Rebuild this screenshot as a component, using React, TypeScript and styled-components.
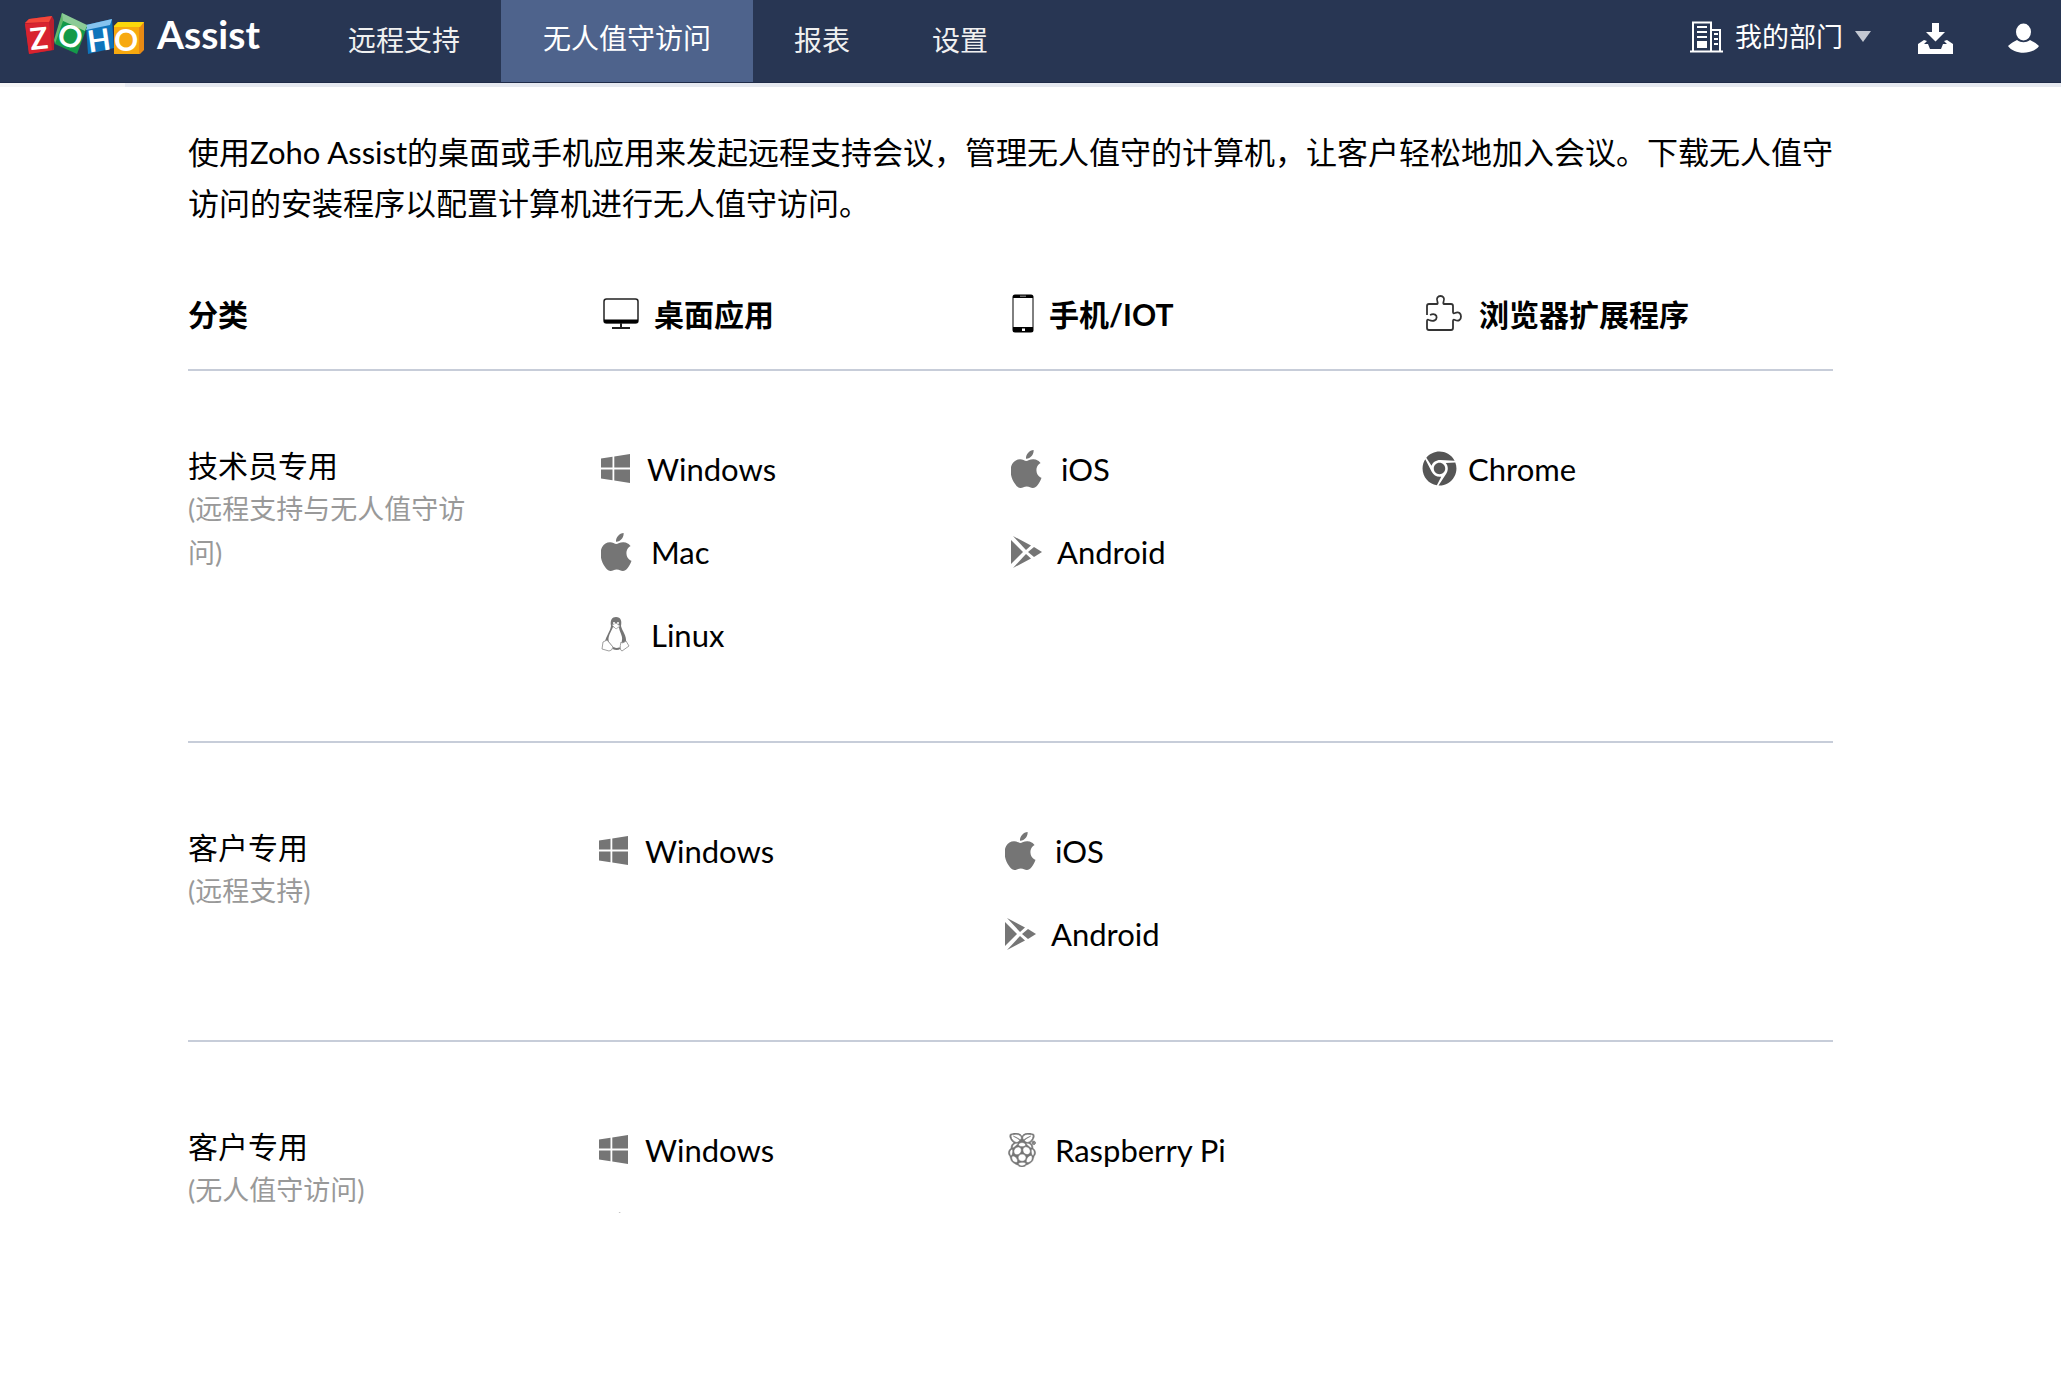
import React from "react";
import styled, { createGlobalStyle } from "styled-components";
import { SiApple, SiRaspberrypi } from "react-icons/si";
import { FaChrome } from "react-icons/fa";

const sans = '"Lato", "Noto Sans CJK SC", sans-serif';

const GlobalStyle = createGlobalStyle`
  *, *::before, *::after { box-sizing: border-box; }
  body {
    margin: 0;
    background: #ffffff;
    color: #000000;
    font-family: ${sans};
    font-size: 30px;
  }
`;

const TopBar = styled.header`
  display: flex;
  align-items: stretch;
  height: 83px;
  background: #283653;
  border-bottom: 1px solid #1f2b48;
`;

const Brand = styled.a`
  display: flex;
  align-items: center;
  gap: 12px;
  width: 307px;
  padding: 0 0 14px 24px;
  color: #ffffff;
  font-size: 39px;
  font-weight: 700;
  text-decoration: none;
`;

const LogoArt = styled.svg`
  flex: none;
  overflow: visible;
`;

const BlockLetter = styled.text`
  fill: #ffffff;
  font-family: ${sans};
  font-size: 30px;
  font-weight: 700;
  text-anchor: middle;
`;

const Nav = styled.nav`
  display: flex;
  flex: 1;
`;

const NavLink = styled.a<{ $active?: boolean }>`
  display: flex;
  align-items: center;
  padding: 0 ${(p) => (p.$active ? 42 : 41)}px ${(p) => (p.$active ? 8 : 4)}px;
  background: ${(p) => (p.$active ? "#4e638c" : "transparent")};
  color: ${(p) => (p.$active ? "#ffffff" : "#f0f0f0")};
  font-size: 28px;
  text-decoration: none;
`;

const Tools = styled.div`
  display: flex;
  align-items: center;
  padding: 0 22px 8px 0;
`;

const ToolButton = styled.button`
  display: flex;
  align-items: center;
  gap: 12px;
  margin: 0;
  padding: 0;
  border: 0;
  background: none;
  color: #ffffff;
  font-family: inherit;
  font-size: 27px;
  line-height: 40px;
`;

const ToolGroup = styled.div`
  display: flex;
  align-items: center;
  gap: 54px;
  margin-left: 46px;
  padding-top: 2px;
`;

const Strip = styled.div`
  height: 4px;
  background: linear-gradient(90deg, #f5f5f6 125px, #e6e9f0 125px);
`;

const Main = styled.main`
  padding: 40px 228px 0 188px;
`;

const Intro = styled.p`
  margin: 0 -20px 0 0;
  font-size: 31px;
  line-height: 51px;
`;

const Downloads = styled.table`
  display: block;
  margin-top: 54px;
`;

const Head = styled.thead`
  display: block;
`;

const Body = styled.tbody`
  display: block;
`;

const Row = styled.tr<{ $columns: string; $top?: number }>`
  display: grid;
  grid-template-columns: ${(p) => p.$columns};
  padding-top: ${(p) => p.$top ?? 68}px;
  padding-bottom: 63px;
  border-bottom: 2px solid #c7cdd9;

  &:last-child {
    padding-bottom: 0;
    border-bottom: 0;
  }
`;

const HeadRow = styled(Row)`
  && {
    padding: 0 0 26px;
    border-bottom: 2px solid #c7cdd9;
  }
`;

const HeadCell = styled.th`
  display: flex;
  align-items: center;
  gap: 15px;
  height: 60px;
  padding: 0;
  font-weight: 700;
  text-align: left;
`;

const AudienceCell = styled.th`
  padding: 14px 120px 0 0;
  font-weight: 400;
  text-align: left;
  line-height: 44px;
`;

const Note = styled.div`
  color: #999999;
  font-size: 27px;
  line-height: 44px;
`;

const Cell = styled.td`
  padding: 0;
`;

const AppLink = styled.a`
  display: flex;
  align-items: center;
  height: 83px;
  padding-bottom: 4px;
  color: #000000;
  font-size: 31px;
  text-decoration: none;
`;

const IconBox = styled.span<{ $width: number }>`
  display: flex;
  width: ${(p) => p.$width}px;
  flex: none;
  color: #757575;
`;

const Peek = styled.div`
  display: flex;
  height: 20px;
  padding: 19px 0 0 18px;
`;

function ZohoLogo() {
  return (
    <LogoArt width="121" height="43" viewBox="0 0 121 43" role="img" aria-label="ZOHO">
      <path d="M1 10 L5 6 L28 3 L30 7 L30 37 L5 41 Z" fill="#b81f2e" />
      <path d="M1 10 L5 6 L28 3 L25 9 Z" fill="#f4473a" />
      <path d="M1 11 L25 9 L28 37 L5 41 Z" fill="#d8232f" />
      <path d="M62 12 L88 6 L90 35 L64 41 Z" fill="#0f74bb" />
      <path d="M62 12 L88 6 L86 12 L62 17 Z" fill="#86c4ef" />
      <path d="M38 0 L63 14 L53 41 L31 31 Z" fill="#149a49" />
      <path d="M38 0 L63 12 L61 18 L37 7 Z" fill="#8ccb97" />
      <path d="M38 0 L39 8 L31 31 L30 27 Z" fill="#62b96b" />
      <path d="M90 13 L94 9 L120 9 L120 37 L116 41 L90 41 Z" fill="#e88a14" />
      <path d="M90 13 L94 9 L120 9 L116 14 L90 14 Z" fill="#fbd80b" />
      <path d="M90 14 L115 14 L115 41 L90 41 Z" fill="#f7a90f" />
      <g transform="rotate(-6 15 25)"><BlockLetter x="15" y="36">Z</BlockLetter></g>
      <g transform="rotate(20 46 24)"><BlockLetter x="46" y="34">O</BlockLetter></g>
      <g transform="rotate(-8 75 27)"><BlockLetter x="75" y="38">H</BlockLetter></g>
      <BlockLetter x="102" y="38">O</BlockLetter>
    </LogoArt>
  );
}

function BuildingIcon() {
  return (
    <svg width="33" height="32" viewBox="0 0 33 32" fill="none" stroke="#fff" strokeWidth="2" aria-hidden="true">
      <path d="M0 30.5H33" />
      <path d="M3 30V1.500H21V30M21 9H30V30" />
      <path d="M7 6H17M7 11H17M7 16H17" />
      <path d="M24 13H28M24 18H28M24 23H28" />
      <path d="M8 21H16V26H8Z" fill="#fff" />
    </svg>
  );
}

function CaretIcon() {
  return (
    <svg width="16" height="12" viewBox="0 0 16 12" aria-hidden="true">
      <path d="M0 0H16L8 11Z" fill="#c3c8d2" />
    </svg>
  );
}

function DownloadIcon() {
  return (
    <svg width="37" height="33" viewBox="0 0 37 33" fill="#fff" aria-hidden="true">
      <path d="M15 1H22V10H28L18.500 19.500L9 10H15Z" />
      <path d="M7 18L10 19L7 22H11L13 27H24L26 22H30L27 19L30 18L36 22V32H1V22Z" />
    </svg>
  );
}

function PersonIcon() {
  return (
    <svg width="31" height="30" viewBox="0 0 31 30" fill="#fff" aria-hidden="true">
      <ellipse cx="15.500" cy="9" rx="7.500" ry="8.500" />
      <path d="M0 23C3 20 7 18 9 17C13 20 18 20 22 17C24 18 28 20 31 23C25 32 6 32 0 23Z" />
    </svg>
  );
}

function MonitorIcon() {
  return (
    <svg width="36" height="31" viewBox="0 0 36 31" aria-hidden="true">
      <rect x="1" y="1" width="34" height="24" rx="2.500" fill="none" stroke="#222" strokeWidth="1.500" />
      <path d="M1 21.500H35V23.500Q35 25 33 25H3Q1 25 1 23.500Z" fill="#000" />
      <path d="M18 25V30M9 30H27" stroke="#222" strokeWidth="2" />
    </svg>
  );
}

function PhoneIcon() {
  return (
    <svg width="22" height="39" viewBox="0 0 22 39" aria-hidden="true">
      <rect x="0.500" y="0.500" width="21" height="38" rx="2.500" fill="#000" />
      <rect x="1.500" y="4" width="19" height="29" fill="#fff" />
      <path d="M8 2.200H14" stroke="#999" />
      <rect x="10" y="34.500" width="3" height="2.500" fill="#fff" />
    </svg>
  );
}

function PuzzleIcon() {
  return (
    <svg width="38" height="36" viewBox="0 0 38 36" fill="none" stroke="#333" strokeWidth="1.800" aria-hidden="true">
      <path d="M1 20V11Q1 9 3 9H11Q12 9 11.500 7C8 -1 21 -1 17.500 7Q17 9 18 9H25Q27 9 27 11V17Q27 19 29 18C37 14 37 29 29 25Q27 24 27 26V33Q27 35 25 35H3Q1 35 1 33V26Q1 24 3 25C13 29 13 16 4 20" />
    </svg>
  );
}

function WindowsIcon() {
  return (
    <svg width="29" height="29" viewBox="0 0 29 29" fill="#757575" aria-hidden="true">
      <path d="M0 4.500L11.500 2.800V13.600H0ZM13.300 2.400L29 0V13.600H13.300ZM0 15.400H11.500V26.200L0 24.500ZM13.300 15.400H29V29L13.300 26.600Z" />
    </svg>
  );
}

function LinuxIcon() {
  return (
    <svg width="29" height="35" viewBox="0 0 29 35" aria-hidden="true">
      <path d="M10 9C9 3 11 0 15 0C20 0 21 4 20 9C21 14 26 18 25 26L20 29L9 31L4 25C5 19 9 15 10 9Z" fill="#757575" />
      <path d="M12 10C10 15 6 20 8 25L12 30Q16 32 20 29L21 23C22 19 18 14 18 10Q15 12 12 10Z" fill="#fff" />
      <path d="M11 8L15 6L19 9L15 12Z" fill="#fff" stroke="#999" strokeWidth="0.700" />
      <circle cx="13" cy="6" r="1" fill="#fff" />
      <circle cx="17" cy="6" r="1" fill="#fff" />
      <path d="M2 25L6 23L12 30Q11 34 8 34L1 32ZM20 25Q21 27 25 24L28 29L21 34Q18 33 20 25Z" fill="#fff" stroke="#888" strokeWidth="0.800" />
      <path d="M12 31Q16 33 19 31" fill="none" stroke="#757575" strokeWidth="2" />
    </svg>
  );
}

function PlayIcon() {
  return (
    <svg width="31" height="32" viewBox="0 0 31 32" fill="#757575" aria-hidden="true">
      <path d="M0 4L12 16L0 28Z" />
      <path d="M2 0L20 9.500L15 14Z" />
      <path d="M2 32L20 22.500L15 18Z" />
      <path d="M23 11L31 16L23 21L17 16Z" />
    </svg>
  );
}

function AppleIcon() {
  return <SiApple size={38} viewBox="2.500 0 24 24" aria-hidden="true" />;
}

function RaspberryIcon() {
  return <SiRaspberrypi size={34} viewBox="0 0 24 24" stroke="#757575" strokeWidth="0.400" aria-hidden="true" />;
}

function ChromeIcon() {
  return <FaChrome size={35} color="#555555" aria-hidden="true" />;
}

const apps = {
  windows: { label: "Windows", icon: WindowsIcon, width: 46 },
  mac: { label: "Mac", icon: AppleIcon, width: 50 },
  linux: { label: "Linux", icon: LinuxIcon, width: 50 },
  ios: { label: "iOS", icon: AppleIcon, width: 50 },
  android: { label: "Android", icon: PlayIcon, width: 46 },
  raspberry: { label: "Raspberry Pi", icon: RaspberryIcon, width: 50 },
  chrome: { label: "Chrome", icon: ChromeIcon, width: 46 },
};

type AppKey = keyof typeof apps;

interface Audience {
  title: string;
  note: string;
  columns: string;
  top?: number;
  cells: AppKey[][];
}

const audiences: Audience[] = [
  {
    title: "技术员专用",
    note: "(远程支持与无人值守访问)",
    columns: "413fr 410fr 411fr 411fr",
    top: 58,
    cells: [["windows", "mac", "linux"], ["ios", "android"], ["chrome"]],
  },
  {
    title: "客户专用",
    note: "(远程支持)",
    columns: "411fr 406fr 414fr 414fr",
    cells: [["windows"], ["ios", "android"], []],
  },
  {
    title: "客户专用",
    note: "(无人值守访问)",
    columns: "411fr 406fr 414fr 414fr",
    cells: [["windows"], ["raspberry"], []],
  },
];

function AppItem({ name }: { name: AppKey }) {
  const { label, icon: Icon, width } = apps[name];
  return (
    <AppLink href="#">
      <IconBox $width={width}>
        <Icon />
      </IconBox>
      {label}
    </AppLink>
  );
}

export default function App() {
  return (
    <>
      <GlobalStyle />
      <TopBar>
        <Brand href="#">
          <ZohoLogo />
          Assist
        </Brand>
        <Nav>
          <NavLink href="#">远程支持</NavLink>
          <NavLink href="#" $active>
            无人值守访问
          </NavLink>
          <NavLink href="#">报表</NavLink>
          <NavLink href="#">设置</NavLink>
        </Nav>
        <Tools>
          <ToolButton>
            <BuildingIcon />
            我的部门
            <CaretIcon />
          </ToolButton>
          <ToolGroup>
            <ToolButton aria-label="下载">
              <DownloadIcon />
            </ToolButton>
            <ToolButton aria-label="账户">
              <PersonIcon />
            </ToolButton>
          </ToolGroup>
        </Tools>
      </TopBar>
      <Strip />
      <Main>
        <Intro lang="zh-CN">
          {
            "使用Zoho Assist的桌面或手机应用来发起远程支持会议\uFF0C管理无人值守的计算机\uFF0C让客户轻松地加入会议。下载无人值守访问的安装程序以配置计算机进行无人值守访问。"
          }
        </Intro>
        <Downloads>
          <Head>
            <HeadRow $columns="415fr 409fr 414fr 407fr">
              <HeadCell scope="col">分类</HeadCell>
              <HeadCell scope="col">
                <MonitorIcon />
                桌面应用
              </HeadCell>
              <HeadCell scope="col">
                <PhoneIcon />
                手机/IOT
              </HeadCell>
              <HeadCell scope="col">
                <PuzzleIcon />
                浏览器扩展程序
              </HeadCell>
            </HeadRow>
          </Head>
          <Body>
            {audiences.map((audience, row) => (
              <Row key={row} $columns={audience.columns} $top={audience.top}>
                <AudienceCell scope="row">
                  {audience.title}
                  <Note>{audience.note}</Note>
                </AudienceCell>
                {audience.cells.map((cell, column) => (
                  <Cell key={column}>
                    {cell.map((name) => (
                      <AppItem key={name} name={name} />
                    ))}
                    {row === 2 && column === 0 && (
                      <Peek>
                        <svg width="4" height="2" viewBox="0 0 4 2" aria-hidden="true">
                          <path d="M0 2L3 0L4 2Z" fill="#aaaaaa" />
                        </svg>
                      </Peek>
                    )}
                  </Cell>
                ))}
              </Row>
            ))}
          </Body>
        </Downloads>
      </Main>
    </>
  );
}
